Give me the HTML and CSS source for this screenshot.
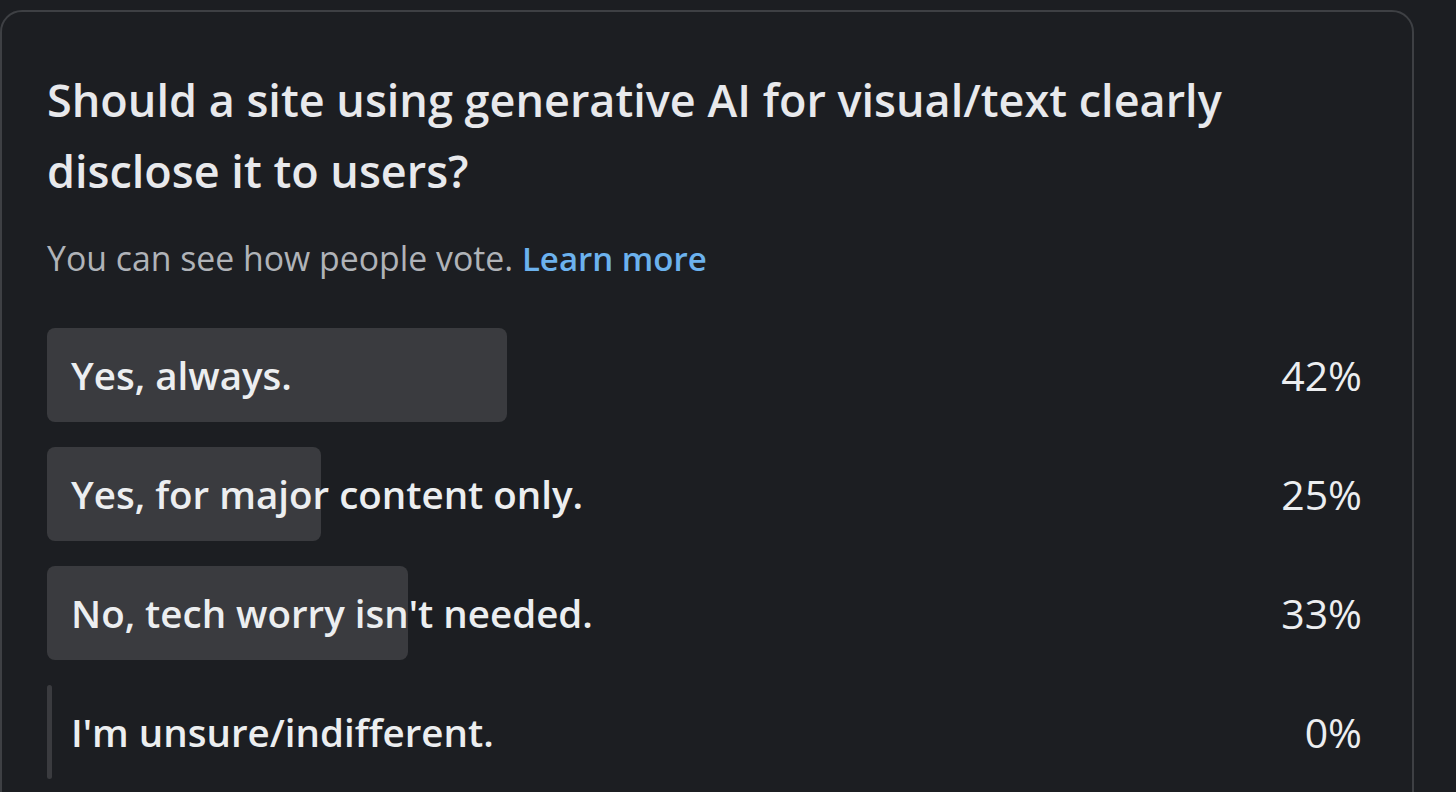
FILE: index.html
```html
<!DOCTYPE html>
<html lang="en">
<head>
  <meta charset="UTF-8">
  <title>Poll</title>
  <link rel="stylesheet" href="styles.css">
</head>
<body>
  <div class="poll-card">
    <h1 class="poll-title">Should a site using generative AI for visual/text clearly disclose it to users?</h1>
    <p class="poll-note">You can see how people vote. <a href="#">Learn more</a></p>

    <div class="poll-options">
      <div class="option">
        <div class="track">
          <div class="fill" style="width: 42%"></div>
          <span class="label">Yes, always.</span>
        </div>
        <span class="percent">42%</span>
      </div>
      <div class="option">
        <div class="track">
          <div class="fill" style="width: 25%"></div>
          <span class="label">Yes, for major content only.</span>
        </div>
        <span class="percent">25%</span>
      </div>
      <div class="option">
        <div class="track">
          <div class="fill" style="width: 33%"></div>
          <span class="label">No, tech worry isn't needed.</span>
        </div>
        <span class="percent">33%</span>
      </div>
      <div class="option">
        <div class="track">
          <div class="fill" style="width: 0%"></div>
          <span class="label">I'm unsure/indifferent.</span>
        </div>
        <span class="percent">0%</span>
      </div>
    </div>
  </div>
</body>
</html>
```

FILE: styles.css
```css
body {
  margin: 0;
  padding-top: 10px;
  background-color: #1c1e22;
  font-family: "Open Sans", "Noto Sans", sans-serif;
  color: #e4e6eb;
  overflow: hidden;
}

.poll-card {
  width: 1414px;
  min-height: 900px;
  border: 2px solid #3e4044;
  border-radius: 22px;
  padding: 0 50px 0 45px;
  box-sizing: border-box;
  background-color: #1c1e22;
}

.poll-title {
  margin: 52px 0 0;
  font-size: 45px;
  line-height: 71px;
  font-weight: 600;
  color: #e8e9ec;
}

.poll-note {
  margin: 27px 0 0;
  font-size: 33.8px;
  line-height: 50px;
  color: #b0b3b8;
}

.poll-note a {
  color: #6cb2ee;
  font-size: 33px;
  font-weight: 600;
  text-decoration: none;
}

.poll-options {
  margin-top: 44px;
  display: flex;
  flex-direction: column;
  gap: 25px;
}

.option {
  display: flex;
  align-items: center;
  height: 94px;
}

.track {
  position: relative;
  width: 1095px;
  height: 100%;
  display: flex;
  align-items: center;
}

.fill {
  position: absolute;
  left: 0;
  top: 0;
  bottom: 0;
  min-width: 5px;
  background-color: #3a3b3f;
  border-radius: 8px;
}

.label {
  position: relative;
  padding-left: 24px;
  font-size: 38.5px;
  font-weight: 600;
  color: #eceef0;
  white-space: nowrap;
}

.percent {
  flex: 1;
  text-align: right;
  font-size: 41px;
  font-weight: 500;
  color: #eceef0;
}
```
